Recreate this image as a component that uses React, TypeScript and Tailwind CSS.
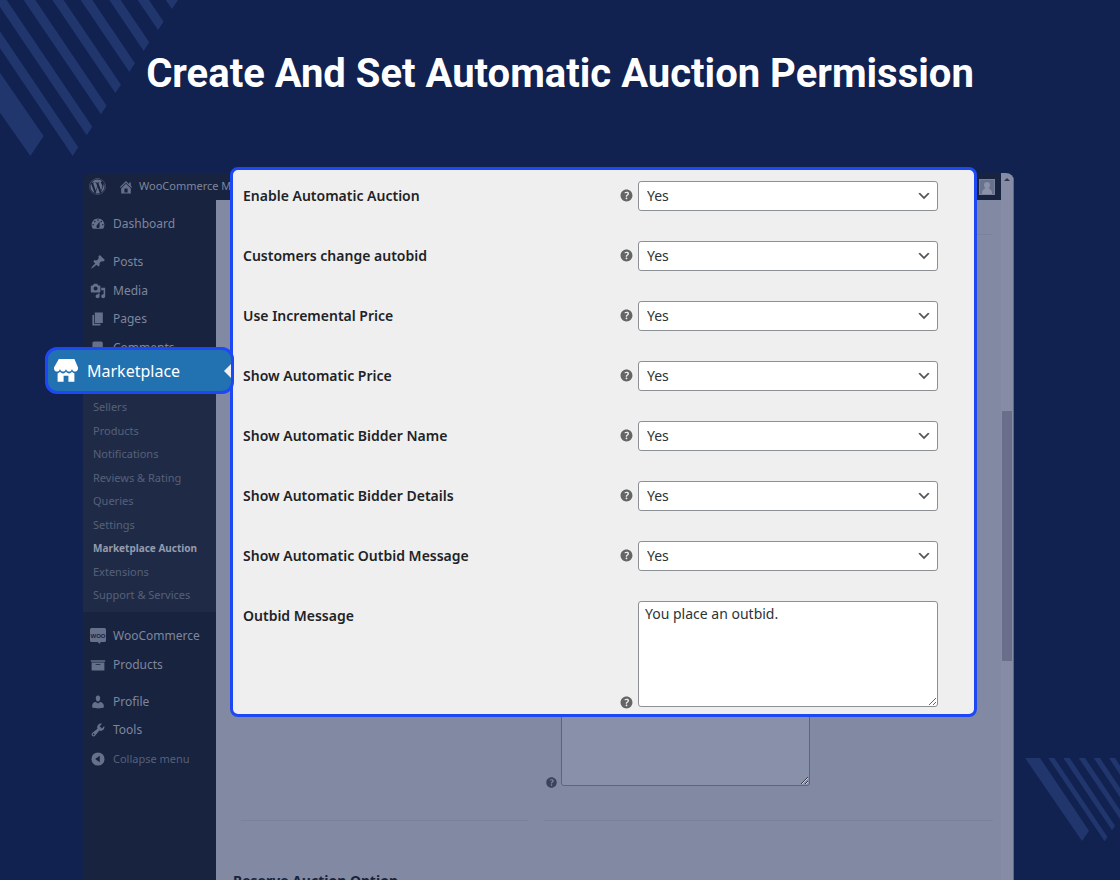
import type { ReactNode } from "react";
import { FaWordpress } from "react-icons/fa";

const PATHS = {
  home: "M16 8.5l1.53 1.53-1.06 1.06L10 4.6l-6.47 6.49-1.06-1.06L10 2.5l4 4v-2h2v4zm-6-2.46l6 5.99V18H4v-5.97zM12 17v-5H8v5h4z",
  dashboard:
    "M3.76 16h12.48c1.1-1.37 1.76-3.11 1.76-5 0-4.42-3.58-8-8-8s-8 3.58-8 8c0 1.89.66 3.63 1.76 5zM10 4c.55 0 1 .45 1 1s-.45 1-1 1-1-.45-1-1 .45-1 1-1zM6 6c.55 0 1 .45 1 1s-.45 1-1 1-1-.45-1-1 .45-1 1-1zm8 0c.55 0 1 .45 1 1s-.45 1-1 1-1-.45-1-1 .45-1 1-1zm-5.37 5.55L12 7v6c0 1.1-.9 2-2 2s-2-.9-2-2c0-.57.24-1.08.63-1.45zM4 10c.55 0 1 .45 1 1s-.45 1-1 1-1-.45-1-1 .45-1 1-1zm12 0c.55 0 1 .45 1 1s-.45 1-1 1-1-.45-1-1 .45-1 1-1z",
  pin: "M10.44 3.02l1.82-1.82 6.36 6.35-1.83 1.82c-1.05-.68-2.48-.57-3.41.36l-.75.75c-.92.93-1.04 2.35-.35 3.41l-1.83 1.82-2.41-2.41-2.8 2.79c-.42.42-3.38 2.71-3.8 2.29s1.86-3.39 2.28-3.81l2.79-2.79L4.1 9.36l1.83-1.82c1.05.69 2.48.57 3.4-.36l.75-.75c.93-.92 1.05-2.35.36-3.41z",
  media:
    "M13 11V4c0-.55-.45-1-1-1h-1.67L9 1H5L3.67 3H2c-.55 0-1 .45-1 1v7c0 .55.45 1 1 1h10c.55 0 1-.45 1-1zM7 4.5c1.38 0 2.5 1.12 2.5 2.5S8.38 9.5 7 9.5 4.5 8.38 4.5 7 5.62 4.5 7 4.5zM14 6h5v10.5c0 1.38-1.12 2.5-2.5 2.5S14 17.88 14 16.5s1.12-2.5 2.5-2.5c.17 0 .34.02.5.05V9h-3V6zm-4 8.05V13h2v3.5c0 1.38-1.12 2.5-2.5 2.5S7 17.88 7 16.5 8.12 14 9.5 14c.17 0 .34.02.5.05z",
  page: "M6 15V2h10v13H6zm-1 1h8v2H3V5h2v11z",
  comments: "M5 2h9c1.1 0 2 .9 2 2v7c0 1.1-.9 2-2 2h-2l-5 5v-5H5c-1.1 0-2-.9-2-2V4c0-1.1.9-2 2-2z",
  archive: "M19 4v2H1V4h18zM2 7h16v10H2V7zm11 3V9H7v1h6z",
  user: "M10 9.25c-2.27 0-2.73-3.44-2.73-3.44C7 4.02 7.82 2 9.97 2c2.16 0 2.98 2.02 2.71 3.81 0 0-.41 3.44-2.68 3.44zm0 2.57L12.72 10c2.39 0 4.52 2.33 4.52 4.53v2.49s-3.65 1.13-7.24 1.13c-3.65 0-7.24-1.13-7.24-1.13v-2.49c0-2.25 1.94-4.48 4.47-4.48z",
  wrench:
    "M16.68 9.77c-1.34 1.34-3.3 1.67-4.95.99l-5.41 6.52c-.99.99-2.59.99-3.58 0s-.99-2.59 0-3.57l6.52-5.42c-.68-1.65-.35-3.61.99-4.95 1.28-1.28 3.12-1.62 4.72-1.06l-2.89 2.89 2.82 2.82 2.86-2.87c.53 1.58.18 3.39-1.08 4.65zM3.81 16.21c.4.39 1.04.39 1.43 0 .4-.4.4-1.04 0-1.43-.39-.4-1.03-.4-1.43 0-.39.39-.39 1.03 0 1.43z",
  collapse: "M10 1.8a8.2 8.2 0 1 0 0 16.4a8.2 8.2 0 0 0 0-16.4zM12.2 6v8L6.4 10z",
  store:
    "M1 10c.41.29.96.43 1.5.43.55 0 1.09-.14 1.5-.43.62-.46 1-1.17 1-2 0 .83.37 1.54 1 2 .41.29.96.43 1.5.43.55 0 1.09-.14 1.5-.43.62-.46 1-1.17 1-2 0 .83.37 1.54 1 2 .41.29.96.43 1.51.43.54 0 1.08-.14 1.49-.43.62-.46 1-1.17 1-2 0 .83.37 1.54 1 2 .41.29.96.43 1.5.43.55 0 1.09-.14 1.5-.43.63-.46 1-1.17 1-2V7l-3-7H4L0 7v1c0 .83.37 1.54 1 2zm2 8.99h5v-5h4v5h5v-7c-.37-.05-.72-.22-1-.43-.63-.45-1-.73-1-1.56 0 .83-.38 1.11-1 1.56-.41.3-.95.43-1.49.44-.55 0-1.1-.14-1.51-.44-.63-.45-1-.73-1-1.56 0 .83-.38 1.11-1 1.56-.41.3-.95.43-1.5.44-.54 0-1.09-.14-1.5-.44-.63-.45-1-.73-1-1.57 0 .84-.38 1.12-1 1.57-.29.21-.63.38-1 .44v6.99z",
  help: "M17 10c0-3.87-3.14-7-7-7-3.87 0-7 3.13-7 7s3.13 7 7 7c3.86 0 7-3.13 7-7zm-6.3 1.48H9.14v-.43c0-.38.08-.7.24-.98s.46-.57.88-.89c.41-.29.68-.53.81-.71.14-.18.2-.39.2-.62 0-.25-.09-.44-.28-.58-.19-.13-.45-.19-.79-.19-.58 0-1.25.19-2 .57l-.64-1.28c.87-.49 1.8-.74 2.77-.74.81 0 1.45.2 1.92.58.48.39.71.91.71 1.55 0 .43-.09.8-.29 1.11-.19.32-.57.67-1.11 1.06-.38.28-.61.49-.71.63-.1.15-.15.34-.15.57v.35zm-1.47 2.74c-.18-.17-.27-.42-.27-.73 0-.33.08-.58.26-.75s.43-.25.77-.25c.32 0 .57.09.75.26s.27.42.27.74c0 .3-.09.55-.27.72-.18.18-.43.27-.75.27-.33 0-.58-.09-.76-.26z",
};

type IconName = keyof typeof PATHS;

function Icon({ name, className }: { name: IconName; className: string }) {
  return (
    <svg viewBox="0 0 20 20" fill="currentColor" fillRule="evenodd" aria-hidden="true" className={className}>
      <path d={PATHS[name]} />
    </svg>
  );
}

function WooIcon() {
  return (
    <svg viewBox="0 0 16 16" aria-hidden="true" className="size-4 shrink-0 text-[#67708a]">
      <path fill="currentColor" d="M1.500 0h13A1.500 1.500 0 0 1 16 1.500v11a1.500 1.500 0 0 1-1.500 1.500H10.500l-.5 2-2.500-2h-6A1.500 1.500 0 0 1 0 12.500v-11A1.500 1.500 0 0 1 1.500 0z" />
      <text x="8" y="9.500" textAnchor="middle" fontSize="6" fontWeight="700" fontFamily="Liberation Sans, sans-serif" fill="#17233f">
        WOO
      </text>
    </svg>
  );
}

function NavLink({ label, icon, dim }: { label: string; icon: ReactNode; dim?: boolean }) {
  return (
    <li className="flex flex-1 items-center">
      <a href="#" className="flex items-center gap-[7px] pl-[7px]">
        {icon}
        <span className={dim ? "text-[11px] text-[#56607a]" : "text-xs text-[#7f869d]"}>{label}</span>
      </a>
    </li>
  );
}

const navIcon = "size-4 shrink-0 text-[#67708a]";

const submenu = [
  "Sellers",
  "Products",
  "Notifications",
  "Reviews & Rating",
  "Queries",
  "Settings",
  "Marketplace Auction",
  "Extensions",
  "Support & Services",
];

function Sidebar() {
  return (
    <nav aria-label="Admin menu" className="w-[133px] shrink-0 bg-[#17233f]">
      <ul className="mt-[10px] flex h-7 flex-col">
        <NavLink label="Dashboard" icon={<Icon name="dashboard" className={navIcon} />} />
      </ul>
      <ul className="mt-[10px] flex h-[114px] flex-col">
        <NavLink label="Posts" icon={<Icon name="pin" className={navIcon} />} />
        <NavLink label="Media" icon={<Icon name="media" className={navIcon} />} />
        <NavLink label="Pages" icon={<Icon name="page" className={navIcon} />} />
        <NavLink label="Comments" icon={<Icon name="comments" className={navIcon} />} />
      </ul>
      <div className="bg-[#1f2b46] pt-[34px] pb-[5px]">
        <ul className="flex h-[211px] flex-col pl-[10px]">
          {submenu.map((item) => (
            <li key={item} className="flex flex-1 items-center">
              <a
                href="#"
                className={
                  item === "Marketplace Auction"
                    ? "whitespace-nowrap text-[10px] font-bold text-[#959bae]"
                    : "whitespace-nowrap text-[11px] text-[#56607a]"
                }
              >
                {item}
              </a>
            </li>
          ))}
        </ul>
      </div>
      <ul className="mt-[10px] flex h-[57px] flex-col">
        <NavLink label="WooCommerce" icon={<WooIcon />} />
        <NavLink label="Products" icon={<Icon name="archive" className={navIcon} />} />
      </ul>
      <ul className="mt-[9px] flex h-[85px] flex-col">
        <NavLink label="Profile" icon={<Icon name="user" className={navIcon} />} />
        <NavLink label="Tools" icon={<Icon name="wrench" className={navIcon} />} />
        <NavLink label="Collapse menu" dim icon={<Icon name="collapse" className={navIcon} />} />
      </ul>
    </nav>
  );
}

const settings = [
  "Enable Automatic Auction",
  "Customers change autobid",
  "Use Incremental Price",
  "Show Automatic Price",
  "Show Automatic Bidder Name",
  "Show Automatic Bidder Details",
  "Show Automatic Outbid Message",
];

function SettingsPanel() {
  return (
    <form className="absolute -top-[6px] right-[37px] left-[147px] rounded-lg border-[3px] border-[#1f48f5] bg-[#efefef] pr-9 pb-[7px] pl-[10px] text-sm text-[#1d2327]">
      {settings.map((label, i) => (
        <div key={label} className="flex h-[60px] items-start pt-[11px]">
          <label htmlFor={`setting-${i}`} className="flex-1 leading-[30px] font-semibold">
            {label}
          </label>
          <Icon name="help" className="mt-[6px] mr-[3px] size-[17px] text-[#646566]" />
          <div className="relative">
            <select
              id={`setting-${i}`}
              defaultValue="yes"
              className="block h-[30px] w-[300px] appearance-none rounded-[3px] border border-[#8c8f94] bg-white pr-6 pl-2 text-sm text-[#2c3338]"
            >
              <option value="yes">Yes</option>
              <option value="no">No</option>
            </select>
            <svg
              viewBox="0 0 20 20"
              aria-hidden="true"
              className="pointer-events-none absolute top-[7px] right-[6px] size-4 text-[#555555]"
            >
              <path fill="currentColor" d="M5 6l5 5 5-5 2 1-7 7-7-7 2-1z" />
            </svg>
          </div>
        </div>
      ))}
      <div className="flex items-start pt-[11px]">
        <label htmlFor="outbid-message" className="flex-1 leading-[30px] font-semibold">
          Outbid Message
        </label>
        <Icon name="help" className="mr-[3px] -mb-1 size-[17px] self-end text-[#646566]" />
        <textarea
          id="outbid-message"
          defaultValue="You place an outbid."
          className="block h-[106px] w-[300px] rounded-[3px] border border-[#8c8f94] bg-white px-[6px] py-[2px] text-sm text-[#2c3338]"
        />
      </div>
    </form>
  );
}

function PageContent() {
  return (
    <main className="flex-1 bg-[#8289a2] pr-2 pl-[17px] text-[#17233f]">
      <div className="mt-[34px] ml-2 flex gap-4">
        <hr className="w-[287px] border-[#7a819b]" />
        <hr className="flex-1 border-[#7a819b]" />
      </div>
      <div className="mt-[465px] flex items-start">
        <label htmlFor="page-outbid" className="w-[311px] text-xs leading-5 font-semibold">
          Outbid Message
        </label>
        <Icon name="help" className="mr-[2px] -mb-1 size-[15px] self-end text-[#3a435e]" />
        <textarea
          id="page-outbid"
          className="block h-[86px] w-[249px] rounded-[3px] border border-[#5c6580] bg-[#8990aa]"
        />
      </div>
      <div className="mt-[34px] ml-2 flex gap-4">
        <hr className="w-[287px] border-[#7a819b]" />
        <hr className="flex-1 border-[#7a819b]" />
      </div>
      <h2 className="mt-[50px] text-sm font-bold">Reserve Auction Option</h2>
    </main>
  );
}

export default function App() {
  return (
    <div className="relative h-screen overflow-hidden bg-[#112150] font-['Noto_Sans',sans-serif]">
      <svg viewBox="0 0 540 480" fill="#21366d" aria-hidden="true" className="absolute top-0 left-0 h-40 w-[180px]">
        <path d="M0 218L131 408L91 468L0 338zM0 94L235 442L218 468L0 145zM20 0L277 380L260 406L-14 0zM106 0L320 317L303 343L71 0zM191 0L363 254L346 279L157 0zM277 0L405 190L388 216L242 0zM362 0L448 127L431 153L328 0zM447 0L491 65L474 90L413 0zM534 0L516 27L497 0z" />
      </svg>
      <svg viewBox="75 54 285 252" fill="#21366d" aria-hidden="true" className="absolute top-[758px] right-0 h-[84px] w-[95px]">
        <path d="M75 54H120L267 272L246 303zM145 54H163L322 290L314 304zM190 54H209L345 257L336 271zM236 54H255L360 210V237zM281 54H300L360 144V172zM327 54H345L360 77V104z" />
      </svg>

      <h1 className="relative pt-[49px] text-center font-['Roboto',sans-serif] text-[40px] leading-[50px] font-bold text-white">
        Create And Set Automatic Auction Permission
      </h1>

      <div className="relative mt-[74px] mr-[106px] ml-[83px]">
        <div className="flex overflow-hidden rounded-t-lg">
          <div className="flex min-w-0 flex-1 flex-col">
            <header className="flex h-[27px] items-center bg-[#17233f] pr-[6px] pl-[6px] text-[11px] text-[#7f869d]">
              <FaWordpress aria-hidden="true" className="size-[17px] shrink-0 text-[#67708a]" />
              <Icon name="home" className="ml-3 size-4 shrink-0 text-[#67708a]" />
              <a href="#" className="ml-[5px] whitespace-nowrap">
                WooCommerce Marketplace
              </a>
              <svg viewBox="0 0 16 16" aria-hidden="true" className="ml-auto size-4">
                <path fill="#7a829b" d="M0 0h16v16H0z" />
                <path fill="#69728c" d="M1 1h14v14H1z" />
                <path fill="#8b92a9" d="M8 3a3 3 0 0 1 3 3c0 1.500-.6 2.500-1.500 3.200 2 .6 3.500 2.300 3.500 4.800V15H3v-1c0-2.500 1.500-4.200 3.500-4.800C5.600 8.500 5 7.500 5 6a3 3 0 0 1 3-3z" />
              </svg>
            </header>
            <div className="flex flex-1">
              <Sidebar />
              <PageContent />
            </div>
          </div>
          <div className="w-[13px] shrink-0 border-r border-[#5f6886] bg-[#868ca5]">
            <svg viewBox="0 0 12 12" aria-hidden="true" className="size-3">
              <path fill="#2c3654" d="M3 8L6 5L9 8z" />
            </svg>
            <div className="mx-px mt-[226px] h-[250px] bg-[#696f8a]" />
          </div>
        </div>

        <SettingsPanel />

        <a
          href="#"
          className="absolute top-[174px] -left-[38px] flex h-[47px] w-[189px] items-center gap-[9px] overflow-hidden rounded-xl border-[3px] border-[#1f48f5] bg-[#2271b1] pl-[6px] text-white"
        >
          <Icon name="store" className="size-6 shrink-0" />
          <span className="text-base">Marketplace</span>
          <svg viewBox="0 0 7 14" aria-hidden="true" className="ml-auto h-[14px] w-[7px]">
            <path fill="#f0f0f1" d="M7 0v14L0 7z" />
          </svg>
        </a>
      </div>
    </div>
  );
}
